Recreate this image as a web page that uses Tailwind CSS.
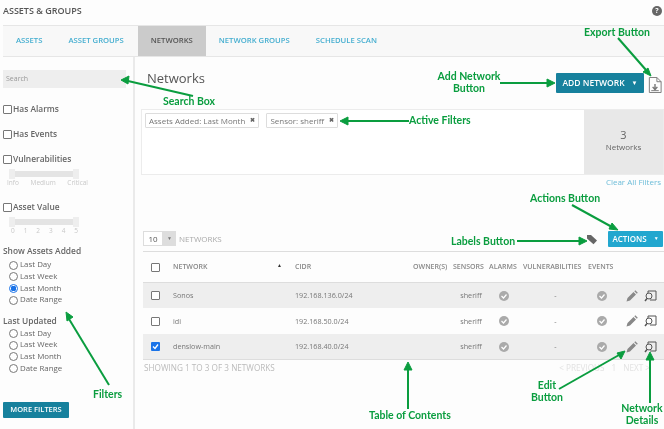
<!DOCTYPE html>
<html>
<head>
<meta charset="utf-8">
<script src="https://cdn.jsdelivr.net/npm/@tailwindcss/browser@4"></script>
</head>
<body class="bg-[#fdfdfd]">
<div class="relative w-[664px] h-[429px] overflow-hidden blur-[0.3px] font-['Open_Sans',sans-serif] text-[#666]">
  <!-- header -->
  <div class="h-[25px] pl-[3px] pr-[2px] pb-[3px] flex items-center justify-between">
    <span class="text-[9px] font-semibold text-[#555]">ASSETS &amp; GROUPS</span>
    <span class="w-[10px] h-[10px] rounded-full bg-[#666] text-white text-[7px] font-bold flex items-center justify-center">?</span>
  </div>
  <!-- tabs -->
  <div class="ml-[3px] h-[32px] bg-[#f8f8f8] border-y border-[#e6e6e6] flex items-stretch text-[7.7px] font-semibold text-[#45aed0]">
    <div class="pl-[13px] pr-[16px] flex items-center">ASSETS</div>
    <div class="px-[10px] flex items-center">ASSET GROUPS</div>
    <div class="w-[68px] ml-[4px] bg-[#cbcbcb] text-[#555] flex items-center justify-center">NETWORKS</div>
    <div class="pl-[13px] pr-[26px] flex items-center">NETWORK GROUPS</div>
    <div class="flex items-center">SCHEDULE SCAN</div>
  </div>
  <div class="flex h-[372px]">
    <!-- sidebar -->
    <aside class="w-[135px] shrink-0 border-r-2 border-[#eaeaea] pl-[3px] pt-[13px] text-[8.4px] font-semibold text-[#666]">
      <div class="w-[123px] h-[18px] bg-[#eeeeee] pl-[3px] flex items-center text-[7px] font-normal text-[#999]">Search</div>
      <label class="mt-[15px] flex items-center gap-[1px] h-[12px]"><span class="w-[9px] h-[9px] border border-[#777] rounded-[1px] bg-white"></span>Has Alarms</label>
      <label class="mt-[13px] flex items-center gap-[1px] h-[12px]"><span class="w-[9px] h-[9px] border border-[#777] rounded-[1px] bg-white"></span>Has Events</label>
      <label class="mt-[13px] flex items-center gap-[1px] h-[12px]"><span class="w-[9px] h-[9px] border border-[#777] rounded-[1px] bg-white"></span>Vulnerabilities</label>
      <div class="mt-[4px] ml-[6px] w-[70px] h-[10px] flex items-center justify-between bg-[linear-gradient(#e4e4e4,#e4e4e4)] bg-[length:100%_6px] bg-center bg-no-repeat"><span class="w-[6px] h-[10px] bg-[#eeeeee]"></span><span class="w-[6px] h-[10px] bg-[#eeeeee]"></span></div>
      <div class="ml-[4px] w-[81px] h-[8px] flex justify-between text-[6.5px] leading-[8px] font-normal text-[#c8c8c8]"><span>Info</span><span>Medium</span><span>Critical</span></div>
      <label class="mt-[14px] flex items-center gap-[1px] h-[12px]"><span class="w-[9px] h-[9px] border border-[#777] rounded-[1px] bg-white"></span>Asset Value</label>
      <div class="mt-[4px] ml-[6px] w-[70px] h-[10px] flex items-center justify-between bg-[linear-gradient(#e4e4e4,#e4e4e4)] bg-[length:100%_6px] bg-center bg-no-repeat"><span class="w-[6px] h-[10px] bg-[#eeeeee]"></span><span class="w-[6px] h-[10px] bg-[#eeeeee]"></span></div>
      <div class="ml-[8px] w-[67px] h-[8px] flex justify-between text-[6.5px] leading-[8px] font-normal text-[#c8c8c8]"><span>0</span><span>1</span><span>2</span><span>3</span><span>4</span><span>5</span></div>
      <div class="mt-[10px] h-[12px] flex items-center">Show Assets Added</div>
      <div class="mt-[2.400px] ml-[6px] text-[7.9px] font-normal text-[#666] flex flex-col">
        <label class="h-[11.7px] flex items-center gap-[2px]"><span class="w-[9px] h-[9px] rounded-full border border-[#777] bg-white"></span>Last Day</label>
        <label class="h-[11.7px] flex items-center gap-[2px]"><span class="w-[9px] h-[9px] rounded-full border border-[#777] bg-white"></span>Last Week</label>
        <label class="h-[11.7px] flex items-center gap-[2px]"><span class="w-[9px] h-[9px] rounded-full border border-[#1a73e8] bg-[radial-gradient(circle,#1a73e8_55%,#fff_60%)]"></span>Last Month</label>
        <label class="h-[11.7px] flex items-center gap-[2px]"><span class="w-[9px] h-[9px] rounded-full border border-[#777] bg-white"></span>Date Range</label>
      </div>
      <div class="mt-[9px] h-[12px] flex items-center">Last Updated</div>
      <div class="mt-[0.5px] ml-[6px] text-[7.9px] font-normal text-[#666] flex flex-col">
        <label class="h-[11.7px] flex items-center gap-[2px]"><span class="w-[9px] h-[9px] rounded-full border border-[#777] bg-white"></span>Last Day</label>
        <label class="h-[11.7px] flex items-center gap-[2px]"><span class="w-[9px] h-[9px] rounded-full border border-[#777] bg-white"></span>Last Week</label>
        <label class="h-[11.7px] flex items-center gap-[2px]"><span class="w-[9px] h-[9px] rounded-full border border-[#777] bg-white"></span>Last Month</label>
        <label class="h-[11.7px] flex items-center gap-[2px]"><span class="w-[9px] h-[9px] rounded-full border border-[#777] bg-white"></span>Date Range</label>
      </div>
      <div class="mt-[27.7px] w-[66px] h-[16px] bg-[#17819d] text-white text-[7.5px] font-semibold flex items-center justify-center rounded-[1px]">MORE FILTERS</div>
    </aside>
    <!-- main -->
    <main class="flex-1 min-w-0 pl-[6px] flex flex-col">
      <div class="h-[52px] flex items-start justify-between">
        <h1 class="ml-[6px] mt-[12px] text-[13px] leading-[18px] text-[#555]">Networks</h1>
        <div class="mt-[16px] flex items-start gap-[4px] mr-[2px]">
          <div class="w-[88px] h-[20px] bg-[#17819d] text-white text-[8.500px] font-semibold flex items-center justify-center gap-[7px] rounded-[1px]">ADD NETWORK <span class="text-[6px]">▼</span></div>
          <svg class="mt-[4px]" width="14" height="16" viewBox="0 0 14 17" fill="none" stroke="#777" stroke-width="1"><path d="M1 .5h8l4.500 4.500v11.500h-12.500zM9 .5v4.500h4.500"/><path d="M7 7.500v5M4.500 10.500l2.500 3 2.500-3" stroke-width="1.500"/><path d="M3 14.500h8"/></svg>
        </div>
      </div>
      <!-- filter box -->
      <div class="h-[66px] flex border border-[#ececec] bg-white">
        <div class="flex-1 pt-[3px] pl-[3px] flex items-start gap-[7px] text-[8px] text-[#777]">
          <div class="h-[15px] px-[3px] border border-[#ddd] flex items-center gap-[5px] rounded-[1px]">Assets Added: Last Month <span class="font-bold text-[#666] text-[6px]">✖</span></div>
          <div class="h-[15px] px-[3px] border border-[#ddd] flex items-center gap-[5px] rounded-[1px]">Sensor: sheriff <span class="font-bold text-[#666] text-[6px]">✖</span></div>
        </div>
        <div class="w-[79px] pb-[4px] bg-[#e8e8e8] flex flex-col items-center justify-center text-[#666]">
          <span class="text-[11px] leading-[14px]">3</span>
          <span class="text-[8px] leading-[10px]">Networks</span>
        </div>
      </div>
      <div class="h-[13px] pr-[3px] text-right text-[8px] leading-[13px] text-[#6cbcd8]">Clear All Filters</div>
      <!-- table controls -->
      <div class="mt-[43px] ml-[2px] h-[20px] flex items-start justify-between">
        <div class="flex items-center text-[8px] text-[#aaa]">
          <span class="w-[20px] h-[15px] border border-[#ddd] bg-white text-[#555] flex items-center justify-center">10</span>
          <span class="w-[13px] h-[15px] bg-[#ddd] text-[#777] text-[5px] flex items-center justify-center">▼</span>
          <span class="ml-[3px]">NETWORKS</span>
        </div>
        <div class="flex items-center gap-[10px] mr-[1px]">
          <svg width="12" height="11" viewBox="0 0 12 11" fill="#666"><path d="M1 1h4l6 5.500-3.500 3.800-6.500-5.800z"/></svg>
          <div class="w-[55px] h-[16px] bg-[#22a7cf] text-white text-[8px] font-semibold flex items-center justify-center gap-[7px] rounded-[1px]">ACTIONS <span class="text-[5px]">▼</span></div>
        </div>
      </div>
      <!-- table -->
      <div class="ml-[2px] border-t border-[#ddd] text-[7.2px] text-[#777]">
        <div class="h-[30px] grid grid-cols-[30px_122px_118px_40px_36px_34px_65px_33px_21px_1fr] items-center font-semibold text-[7px] text-[#888]">
          <span class="ml-[8px] w-[9px] h-[9px] border border-[#777] rounded-[1px] bg-white"></span>
          <span class="flex justify-between pr-[13px]"><span>NETWORK</span><span class="text-[5px] text-[#333]">▲</span></span>
          <span>CIDR</span><span>OWNER(S)</span><span>SENSORS</span><span>ALARMS</span><span>VULNERABILITIES</span><span>EVENTS</span>
        </div>
        <div class="h-[26px] bg-[#eeeeee] border-t border-[#ddd] grid grid-cols-[30px_122px_118px_40px_36px_34px_65px_33px_21px_1fr] items-center">
          <span class="ml-[8px] w-[9px] h-[9px] border border-[#777] rounded-[1px] bg-white"></span>
          <span>Sonos</span><span>192.168.136.0/24</span><span></span><span class="text-center">sheriff</span>
          <svg class="justify-self-center -ml-[4px]" width="10" height="10" viewBox="0 0 10 10"><circle cx="5" cy="5" r="5" fill="#aaa"/><path d="M2.500 5l2 2 3-3.500" fill="none" stroke="#fff" stroke-width="1.200"/></svg>
          <span class="text-center">-</span>
          <svg class="justify-self-center -ml-[6px]" width="10" height="10" viewBox="0 0 10 10"><circle cx="5" cy="5" r="5" fill="#aaa"/><path d="M2.500 5l2 2 3-3.500" fill="none" stroke="#fff" stroke-width="1.200"/></svg>
          <svg class="justify-self-center" width="12" height="12" viewBox="0 0 12 12" fill="#888"><path d="M.5 11.500l1-3.500 6-6 2.500 2.500-6 6zM8.300 1.200l1-1 2.500 2.500-1 1z"/></svg>
          <svg class="justify-self-center -ml-[6px]" width="13" height="12" viewBox="0 0 13 12" fill="none" stroke="#555"><path d="M4 3v-2h8v9h-6"/><circle cx="5" cy="6" r="3"/><path d="M3 8.500l-2 2.500" stroke-width="1.500"/></svg>
        </div>
        <div class="h-[26px] grid grid-cols-[30px_122px_118px_40px_36px_34px_65px_33px_21px_1fr] items-center">
          <span class="ml-[8px] w-[9px] h-[9px] border border-[#777] rounded-[1px] bg-white"></span>
          <span>idi</span><span>192.168.50.0/24</span><span></span><span class="text-center">sheriff</span>
          <svg class="justify-self-center -ml-[4px]" width="10" height="10" viewBox="0 0 10 10"><circle cx="5" cy="5" r="5" fill="#aaa"/><path d="M2.500 5l2 2 3-3.500" fill="none" stroke="#fff" stroke-width="1.200"/></svg>
          <span class="text-center">-</span>
          <svg class="justify-self-center -ml-[6px]" width="10" height="10" viewBox="0 0 10 10"><circle cx="5" cy="5" r="5" fill="#aaa"/><path d="M2.500 5l2 2 3-3.500" fill="none" stroke="#fff" stroke-width="1.200"/></svg>
          <svg class="justify-self-center" width="12" height="12" viewBox="0 0 12 12" fill="#888"><path d="M.5 11.500l1-3.500 6-6 2.500 2.500-6 6zM8.300 1.200l1-1 2.500 2.500-1 1z"/></svg>
          <svg class="justify-self-center -ml-[6px]" width="13" height="12" viewBox="0 0 13 12" fill="none" stroke="#555"><path d="M4 3v-2h8v9h-6"/><circle cx="5" cy="6" r="3"/><path d="M3 8.500l-2 2.500" stroke-width="1.500"/></svg>
        </div>
        <div class="h-[26px] bg-[#eeeeee] border-b border-[#ddd] grid grid-cols-[30px_122px_118px_40px_36px_34px_65px_33px_21px_1fr] items-center">
          <span class="ml-[8px] w-[9px] h-[9px] bg-[#1a73e8] rounded-[1px] flex items-center justify-center"><svg width="7" height="7" viewBox="0 0 7 7"><path d="M1 3.500l2 2 3-4" fill="none" stroke="#fff" stroke-width="1.300"/></svg></span>
          <span>denslow-main</span><span>192.168.40.0/24</span><span></span><span class="text-center">sheriff</span>
          <svg class="justify-self-center -ml-[4px]" width="10" height="10" viewBox="0 0 10 10"><circle cx="5" cy="5" r="5" fill="#aaa"/><path d="M2.500 5l2 2 3-3.500" fill="none" stroke="#fff" stroke-width="1.200"/></svg>
          <span class="text-center">-</span>
          <svg class="justify-self-center -ml-[6px]" width="10" height="10" viewBox="0 0 10 10"><circle cx="5" cy="5" r="5" fill="#aaa"/><path d="M2.500 5l2 2 3-3.500" fill="none" stroke="#fff" stroke-width="1.200"/></svg>
          <svg class="justify-self-center" width="12" height="12" viewBox="0 0 12 12" fill="#888"><path d="M.5 11.500l1-3.500 6-6 2.500 2.500-6 6zM8.300 1.200l1-1 2.500 2.500-1 1z"/></svg>
          <svg class="justify-self-center -ml-[6px]" width="13" height="12" viewBox="0 0 13 12" fill="none" stroke="#555"><path d="M4 3v-2h8v9h-6"/><circle cx="5" cy="6" r="3"/><path d="M3 8.500l-2 2.500" stroke-width="1.500"/></svg>
        </div>
        <div class="mt-[2px] pl-[1px] pr-[14px] flex justify-between text-[8.2px] leading-[12px] text-[#bbb]">
          <span>SHOWING 1 TO 3 OF 3 NETWORKS</span>
          <span class="flex gap-[7px] text-[#e2e2e2]"><span>&lt; PREVIOUS</span><span>1</span><span>NEXT &gt;</span></span>
        </div>
      </div>
    </main>
  </div>

  <!-- annotation arrows lying over the page -->
  <svg class="absolute inset-0 pointer-events-none" width="664" height="429" viewBox="0 0 664 429" fill="none" stroke="#0a9d3f" stroke-width="2">
    <path d="M193 96L128 81"/><path d="M121 80l8-4-1 8z" fill="#0a9d3f" stroke-width="1"/>
    <path d="M409 121H347"/><path d="M340 121l8-4v8z" fill="#0a9d3f" stroke-width="1"/>
    <path d="M500 83H548"/><path d="M555 83l-8-4v8z" fill="#0a9d3f" stroke-width="1"/>
    <path d="M618 38L646 70"/><path d="M651 76l-8-4 5-4z" fill="#0a9d3f" stroke-width="1"/>
    <path d="M572 205L612 227"/><path d="M618 230l-9-1 3-6z" fill="#0a9d3f" stroke-width="1"/>
    <path d="M517 241H580"/><path d="M587 241l-8-4v8z" fill="#0a9d3f" stroke-width="1"/>
    <path d="M109 385L69 319"/><path d="M66 312l7 5-6 4z" fill="#0a9d3f" stroke-width="1"/>
    <path d="M408 409V369"/><path d="M408 362l-4 8h8z" fill="#0a9d3f" stroke-width="1"/>
    <path d="M559 389L619 355"/><path d="M625 351l-4 8-4-6z" fill="#0a9d3f" stroke-width="1"/>
    <path d="M650 403V359"/><path d="M650 352l-4 8h8z" fill="#0a9d3f" stroke-width="1"/>
  </svg>
  <!-- annotation labels -->
  <div class="absolute inset-0 pointer-events-none font-['Lato',sans-serif] font-bold text-[10.5px] leading-[12px] text-[#0a9d3f]">
    <span class="absolute left-[163px] top-[95px]">Search Box</span>
    <span class="absolute left-[409px] top-[114px]">Active Filters</span>
    <span class="absolute left-[429px] top-[70px] w-[80px] text-center">Add Network<br>Button</span>
    <span class="absolute left-[584px] top-[26px]">Export Button</span>
    <span class="absolute left-[530px] top-[192px]">Actions Button</span>
    <span class="absolute left-[451px] top-[235px]">Labels Button</span>
    <span class="absolute left-[93px] top-[388px]">Filters</span>
    <span class="absolute left-[369px] top-[409px]">Table of Contents</span>
    <span class="absolute left-[527px] top-[379px] w-[40px] text-center">Edit<br>Button</span>
    <span class="absolute left-[617px] top-[402px] w-[50px] text-center">Network<br>Details</span>
  </div>
</div>
</body>
</html>
